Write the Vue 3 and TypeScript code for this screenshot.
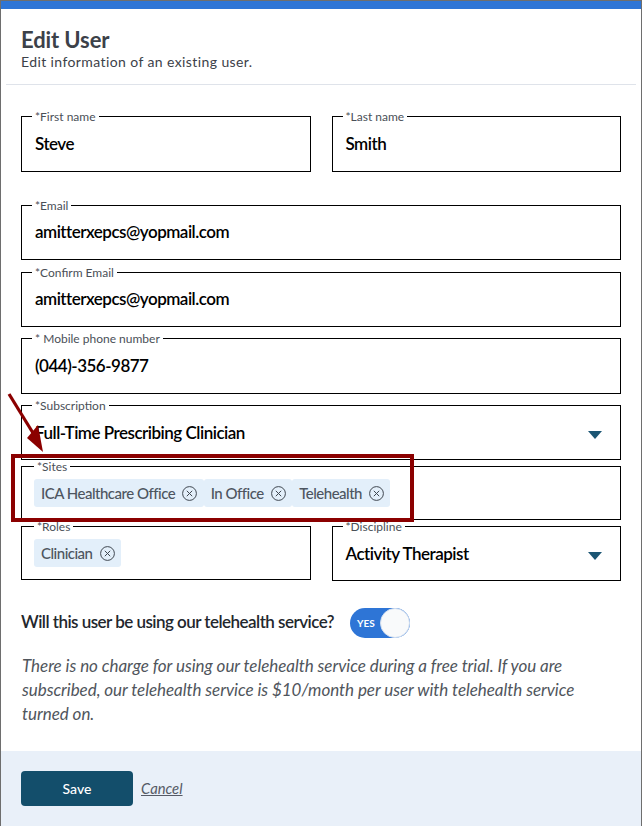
<script setup lang="ts">
interface Field {
  label: string
  value: string
  cls: string
}

const nameFields: Field[] = [
  { label: '*First name', value: 'Steve', cls: 'f-name' },
  { label: '*Last name', value: 'Smith', cls: 'f-name' },
]

const contactFields: Field[] = [
  { label: '*Email', value: 'amitterxepcs@yopmail.com', cls: 'f-email' },
  { label: '*Confirm Email', value: 'amitterxepcs@yopmail.com', cls: 'f-confirm' },
  { label: '* Mobile phone number', value: '(044)-356-9877', cls: 'f-phone' },
]

const sites = ['ICA Healthcare Office', 'In Office', 'Telehealth']
</script>

<template>
  <div class="modal">
    <div class="bar"></div>
    <header class="head">
      <h1>Edit User</h1>
      <p>Edit information of an existing user.</p>
    </header>

    <form class="form" @submit.prevent>
      <div class="row">
        <fieldset v-for="f in nameFields" :key="f.label" class="field" :class="f.cls">
          <legend>{{ f.label }}</legend>
          <span class="value">{{ f.value }}</span>
        </fieldset>
      </div>

      <fieldset v-for="f in contactFields" :key="f.label" class="field" :class="f.cls">
        <legend>{{ f.label }}</legend>
        <span class="value">{{ f.value }}</span>
      </fieldset>

      <fieldset class="field f-sub">
        <legend>*Subscription</legend>
        <span class="value">Full-Time Prescribing Clinician</span>
        <i class="caret"></i>
      </fieldset>

      <fieldset class="field tags f-sites">
        <legend>*Sites</legend>
        <span v-for="s in sites" :key="s" class="tag">
          {{ s }}
          <svg viewBox="0 0 15 15" width="15" height="15">
            <circle cx="7.5" cy="7.5" r="6.9" />
            <path d="M4.8 4.8l5.4 5.4M10.2 4.8l-5.4 5.4" />
          </svg>
        </span>
      </fieldset>

      <div class="row f-roles">
        <fieldset class="field tags">
          <legend>*Roles</legend>
          <span class="tag">
            Clinician
            <svg viewBox="0 0 15 15" width="15" height="15">
              <circle cx="7.5" cy="7.5" r="6.9" />
              <path d="M4.8 4.8l5.4 5.4M10.2 4.8l-5.4 5.4" />
            </svg>
          </span>
        </fieldset>
        <fieldset class="field f-disc">
          <legend>*Discipline</legend>
          <span class="value">Activity Therapist</span>
          <i class="caret"></i>
        </fieldset>
      </div>

      <div class="telehealth">
        <span>Will this user be using our telehealth service?</span>
        <div class="toggle">
          <span>YES</span>
          <i></i>
        </div>
      </div>

      <p class="note">
        There is no charge for using our telehealth service during a free trial. If you are
        subscribed, our telehealth service is $10/month per user with telehealth service
        turned on.
      </p>
    </form>

    <footer class="foot">
      <button type="button" class="save">Save</button>
      <a class="cancel">Cancel</a>
    </footer>

    <!-- annotation drawn over the screenshot -->
    <div class="mark"></div>
    <svg class="arrow" width="40" height="62" viewBox="0 0 40 62">
      <path d="M1 1L25 40" />
      <polygon points="35,59 19,45 30,32" />
    </svg>
  </div>
</template>

<style scoped>
.modal {
  position: relative;
  box-sizing: border-box;
  width: 642px;
  height: 826px;
  display: flex;
  flex-direction: column;
  background: #fff;
  border-top: 1px solid #6e6e6e;
  border-left: 1px solid #6e6e6e;
  border-right: 1px solid #6e6e6e;
  font-family: Lato, "Open Sans", sans-serif;
  color: #3c4149;
}

.bar {
  height: 8px;
  background: #2e75d6;
}

.head {
  margin: 0 5px;
  padding: 18px 0 14px 15px;
  border-bottom: 1px solid #dfe3ea;
}

h1 {
  margin: 0;
  font-size: 22px;
  line-height: 26px;
  font-weight: 700;
  letter-spacing: -0.1px;
}

.head p {
  margin: 0;
  font-size: 14px;
  line-height: 17px;
  letter-spacing: 0.4px;
}

.form {
  flex: 1;
  padding: 24px 20px 0;
}

.row {
  display: flex;
  gap: 21px;
}

.row .field {
  flex: 1 1 0;
  min-width: 0;
}

.field {
  position: relative;
  box-sizing: border-box;
  height: 62px;
  margin: 0;
  padding: 0 13px;
  border: 1px solid #000;
  min-inline-size: 0;
}

legend {
  padding: 1px 3px 0;
  margin-left: -3px;
  margin-bottom: -1px;
  font-size: 12px;
  line-height: 14px;
  color: #4a4f57;
}

.value {
  display: block;
  margin-top: 9px;
  font-size: 17px;
  line-height: 24px;
  font-weight: 600;
  letter-spacing: -0.5px;
  color: #000;
}

.f-name,
.f-phone {
  height: 63px;
}

.f-email {
  margin-top: 26px;
}

.f-confirm {
  margin-top: 5px;
}

.f-email .value,
.f-confirm .value {
  margin-top: 8px;
}

.f-phone,
.f-sub {
  margin-top: 4px;
}

.caret {
  position: absolute;
  right: 18px;
  top: 19px;
  width: 0;
  height: 0;
  border-left: 7.5px solid transparent;
  border-right: 7.5px solid transparent;
  border-top: 8px solid #1b5573;
}

.tags {
  display: flex;
  padding: 0 14px 0 12px;
}

.tags legend {
  margin-left: 0;
}

.f-sites {
  height: 61px;
  margin-top: -1px;
}

.f-roles {
  margin-top: -1px;
}

.f-roles .field {
  height: 61px;
}

.f-roles .f-disc {
  height: 62px;
}

.tag {
  display: inline-flex;
  align-items: center;
  gap: 7px;
  height: 28px;
  margin-top: 6px;
  padding: 0 6.5px 0 7px;
  border-radius: 3px;
  background: #e3effa;
  font-size: 15px;
  font-weight: 500;
  letter-spacing: -0.5px;
  color: #4d5560;
  white-space: nowrap;
}

.tag svg {
  fill: none;
  stroke: #3f4750;
  stroke-width: 1;
}

.telehealth {
  display: flex;
  align-items: center;
  gap: 16px;
  margin-top: 27px;
  font-size: 17px;
  font-weight: 600;
  letter-spacing: -0.53px;
  color: #23272d;
}

.telehealth > span {
  margin-top: -3px;
}

.toggle {
  position: relative;
  box-sizing: border-box;
  width: 60px;
  height: 30px;
  padding-left: 7px;
  border-radius: 15px;
  background: #2e75d6;
  color: #fff;
  font-size: 10px;
  font-weight: 700;
  letter-spacing: 0;
  line-height: 30px;
}

.toggle i {
  position: absolute;
  right: 0;
  top: 0;
  width: 30px;
  height: 30px;
  box-sizing: border-box;
  border-radius: 50%;
  background: #f9fafb;
  border: 1px solid #d3dff0;
}

.note {
  margin: 16px 0 0 1px;
  font-size: 17px;
  line-height: 24px;
  font-style: italic;
  letter-spacing: -0.05px;
  color: #50555c;
}

.foot {
  height: 75px;
  box-sizing: border-box;
  display: flex;
  align-items: center;
  gap: 8px;
  padding: 0 20px;
  background: #e9f0f9;
}

.save {
  width: 112px;
  height: 35px;
  border: 0;
  border-radius: 4px;
  background: #134e6b;
  color: #fff;
  font: 500 14px Lato, sans-serif;
}

.cancel {
  margin-top: -1px;
  font-size: 14.8px;
  font-style: italic;
  text-decoration: underline;
  color: #555a66;
}

.mark {
  position: absolute;
  left: 10px;
  top: 453px;
  width: 403px;
  height: 68px;
  box-sizing: border-box;
  border: 4px solid #8b0000;
  pointer-events: none;
}

.arrow {
  position: absolute;
  left: 7px;
  top: 392px;
  overflow: visible;
}

.arrow path {
  stroke: #8b0000;
  stroke-width: 3.2;
  fill: none;
}

.arrow polygon {
  fill: #8b0000;
}
</style>

<style>
html,
body {
  margin: 0;
  background: #fff;
}
</style>
